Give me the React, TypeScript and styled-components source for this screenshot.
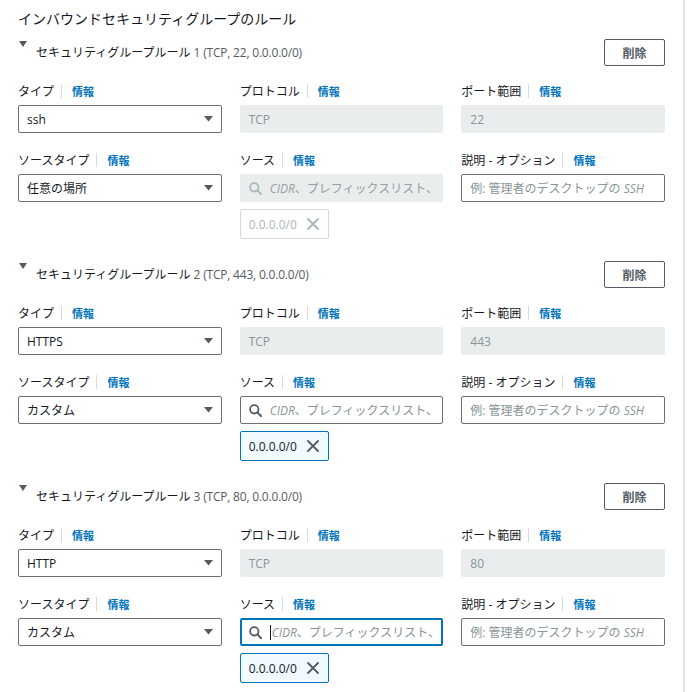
import React from "react";
import styled, { createGlobalStyle, css } from "styled-components";

const Global = createGlobalStyle`
  html, body { margin: 0; padding: 0; background: #ffffff; }
  body {
    font-family: "Open Sans", "Noto Sans CJK JP", sans-serif;
    color: #16191f;
    -webkit-font-smoothing: antialiased;
  }
`;

const Panel = styled.div`
  width: 685px;
  box-sizing: border-box;
  padding: 9px 18px 0 18px;
  border-right: 2px solid #e1e4e5;
  min-height: 692px;
`;

const Title = styled.h2`
  margin: 0;
  font-size: 14px;
  line-height: 20px;
  font-weight: 400;
  color: #16191f;
`;

const Rule = styled.section`
  margin-top: 10px;
  & + & { margin-top: 22px; }
`;

const Header = styled.div`
  display: flex;
  justify-content: space-between;
  align-items: center;
  height: 27px;
`;

const HeaderTitle = styled.div`
  display: flex;
  align-items: center;
  align-self: stretch;
`;

const Caret = styled.svg`
  align-self: flex-start;
  margin: 2px 9px 0 1px;
  flex: none;
`;

const RuleName = styled.span`
  font-size: 12px;
  line-height: 16px;
  color: #16191f;
  margin-top: 1px;
`;

const RuleMeta = styled.span`
  font-size: 12px;
  color: #545b64;
  margin-left: 3px;
  letter-spacing: -0.2px;
`;

const DeleteButton = styled.button`
  width: 61px;
  height: 27px;
  box-sizing: border-box;
  border: 1px solid #545b64;
  border-radius: 2px;
  background: #ffffff;
  color: #545b64;
  font-family: "Open Sans", "Noto Sans CJK JP", sans-serif;
  font-weight: 700;
  font-size: 12px;
  padding: 0;
  cursor: pointer;
`;

const Grid = styled.div`
  display: grid;
  grid-template-columns: repeat(3, 1fr);
  column-gap: 18px;
  row-gap: 19px;
  margin-top: 17px;
  align-items: start;
`;

const Field = styled.div`
  display: flex;
  flex-direction: column;
  gap: 6px;
  min-width: 0;
`;

const LabelRow = styled.div`
  display: flex;
  align-items: center;
  height: 16px;
  font-size: 12px;
  white-space: nowrap;
`;

const LabelText = styled.span`
  color: #16191f;
`;

const Divider = styled.span`
  width: 1px;
  height: 14px;
  background: #d5dbdb;
  margin: 0 10px 0 7px;
`;

const InfoLink = styled.a`
  color: #0073bb;
  font-weight: 700;
  font-size: 11px;
  text-decoration: none;
`;

type BoxVariant = "normal" | "disabled" | "focused";

const Box = styled.div<{ $variant: BoxVariant }>`
  height: 28px;
  box-sizing: border-box;
  border-radius: 2px;
  display: flex;
  align-items: center;
  padding: 0 8px;
  font-size: 12px;
  white-space: nowrap;
  overflow: hidden;
  ${(p) =>
    p.$variant === "disabled"
      ? css`
          background: #eaeded;
          border: 1px solid #eaeded;
          color: #879596;
        `
      : p.$variant === "focused"
      ? css`
          background: #ffffff;
          border: 2px solid #0073bb;
          padding: 0 7px;
          color: #16191f;
        `
      : css`
          background: #ffffff;
          border: 1px solid #687078;
          color: #16191f;
        `}
`;

const SelectValue = styled.span`
  flex: 1;
`;

const Placeholder = styled.span<{ $muted?: boolean }>`
  color: ${(p) => (p.$muted ? "#95a0a1" : "#879596")};
  overflow: hidden;
  white-space: nowrap;
  flex: 1;
  min-width: 0;
`;

const Em = styled.i`
  font-style: italic;
`;

const SearchIcon = styled.svg`
  flex: none;
  margin-right: 8px;
`;

const TextCaret = styled.span`
  display: inline-block;
  width: 1px;
  height: 15px;
  background: #16191f;
  margin-right: 1px;
  vertical-align: middle;
  flex: none;
`;

const Token = styled.div<{ $disabled?: boolean }>`
  margin-top: 1px;
  width: 89px;
  height: 30px;
  box-sizing: border-box;
  border-radius: 2px;
  display: flex;
  align-items: center;
  justify-content: space-between;
  padding: 0 9px 0 8px;
  font-size: 12px;
  ${(p) =>
    p.$disabled
      ? css`
          border: 1px solid #d5dbdb;
          background: #ffffff;
          color: #aab7b8;
        `
      : css`
          border: 1px solid #0073bb;
          background: #f1faff;
          color: #16191f;
        `}
`;

const Label = ({ text }: { text: string }) => (
  <LabelRow>
    <LabelText>{text}</LabelText>
    <Divider />
    <InfoLink href="#">情報</InfoLink>
  </LabelRow>
);

const DownArrow = () => (
  <svg width="9" height="6" viewBox="0 0 9 6">
    <polygon points="0,0 9,0 4.5,5.5" fill="#545b64" />
  </svg>
);

const Magnifier = ({ color }: { color: string }) => (
  <SearchIcon width="13" height="13" viewBox="0 0 13 13">
    <circle cx="5.3" cy="5.3" r="4.2" fill="none" stroke={color} strokeWidth="1.8" />
    <line x1="8.4" y1="8.4" x2="12" y2="12" stroke={color} strokeWidth="2" strokeLinecap="round" />
  </SearchIcon>
);

const XIcon = ({ color }: { color: string }) => (
  <svg width="12" height="12" viewBox="0 0 12 12">
    <path d="M1 1 L11 11 M11 1 L1 11" stroke={color} strokeWidth="1.8" strokeLinecap="round" />
  </svg>
);

type RuleData = {
  n: number;
  port: string;
  type: string;
  sourceType: string;
  sourceState: BoxVariant;
};

const rules: RuleData[] = [
  { n: 1, port: "22", type: "ssh", sourceType: "任意の場所", sourceState: "disabled" },
  { n: 2, port: "443", type: "HTTPS", sourceType: "カスタム", sourceState: "normal" },
  { n: 3, port: "80", type: "HTTP", sourceType: "カスタム", sourceState: "focused" },
];

const RuleBlock = ({ r }: { r: RuleData }) => {
  const disabled = r.sourceState === "disabled";
  return (
    <Rule>
      <Header>
        <HeaderTitle>
          <Caret width="8" height="6" viewBox="0 0 8 6">
            <polygon points="0,0 8,0 4,6" fill="#545b64" />
          </Caret>
          <RuleName>
            セキュリティグループルール
            <RuleMeta>{r.n} (TCP, {r.port}, 0.0.0.0/0)</RuleMeta>
          </RuleName>
        </HeaderTitle>
        <DeleteButton>削除</DeleteButton>
      </Header>
      <Grid>
        <Field>
          <Label text="タイプ" />
          <Box $variant="normal">
            <SelectValue>{r.type}</SelectValue>
            <DownArrow />
          </Box>
        </Field>
        <Field>
          <Label text="プロトコル" />
          <Box $variant="disabled">TCP</Box>
        </Field>
        <Field>
          <Label text="ポート範囲" />
          <Box $variant="disabled">{r.port}</Box>
        </Field>
        <Field>
          <Label text="ソースタイプ" />
          <Box $variant="normal">
            <SelectValue>{r.sourceType}</SelectValue>
            <DownArrow />
          </Box>
        </Field>
        <Field>
          <Label text="ソース" />
          <Box $variant={r.sourceState}>
            <Magnifier color={disabled ? "#aab7b8" : "#545b64"} />
            {r.sourceState === "focused" && <TextCaret />}
            <Placeholder $muted={disabled}>
              <Em>CIDR</Em>、プレフィックスリスト、またはセキュリティグループ
            </Placeholder>
          </Box>
          <Token $disabled={disabled}>
            <span>0.0.0.0/0</span>
            <XIcon color={disabled ? "#aab7b8" : "#545b64"} />
          </Token>
        </Field>
        <Field>
          <Label text="説明 - オプション" />
          <Box $variant="normal">
            <Placeholder>
              例: 管理者のデスクトップの <Em>SSH</Em>
            </Placeholder>
          </Box>
        </Field>
      </Grid>
    </Rule>
  );
};

export default function App() {
  return (
    <>
      <Global />
      <Panel>
        <Title>インバウンドセキュリティグループのルール</Title>
        {rules.map((r) => (
          <RuleBlock key={r.n} r={r} />
        ))}
      </Panel>
    </>
  );
}
